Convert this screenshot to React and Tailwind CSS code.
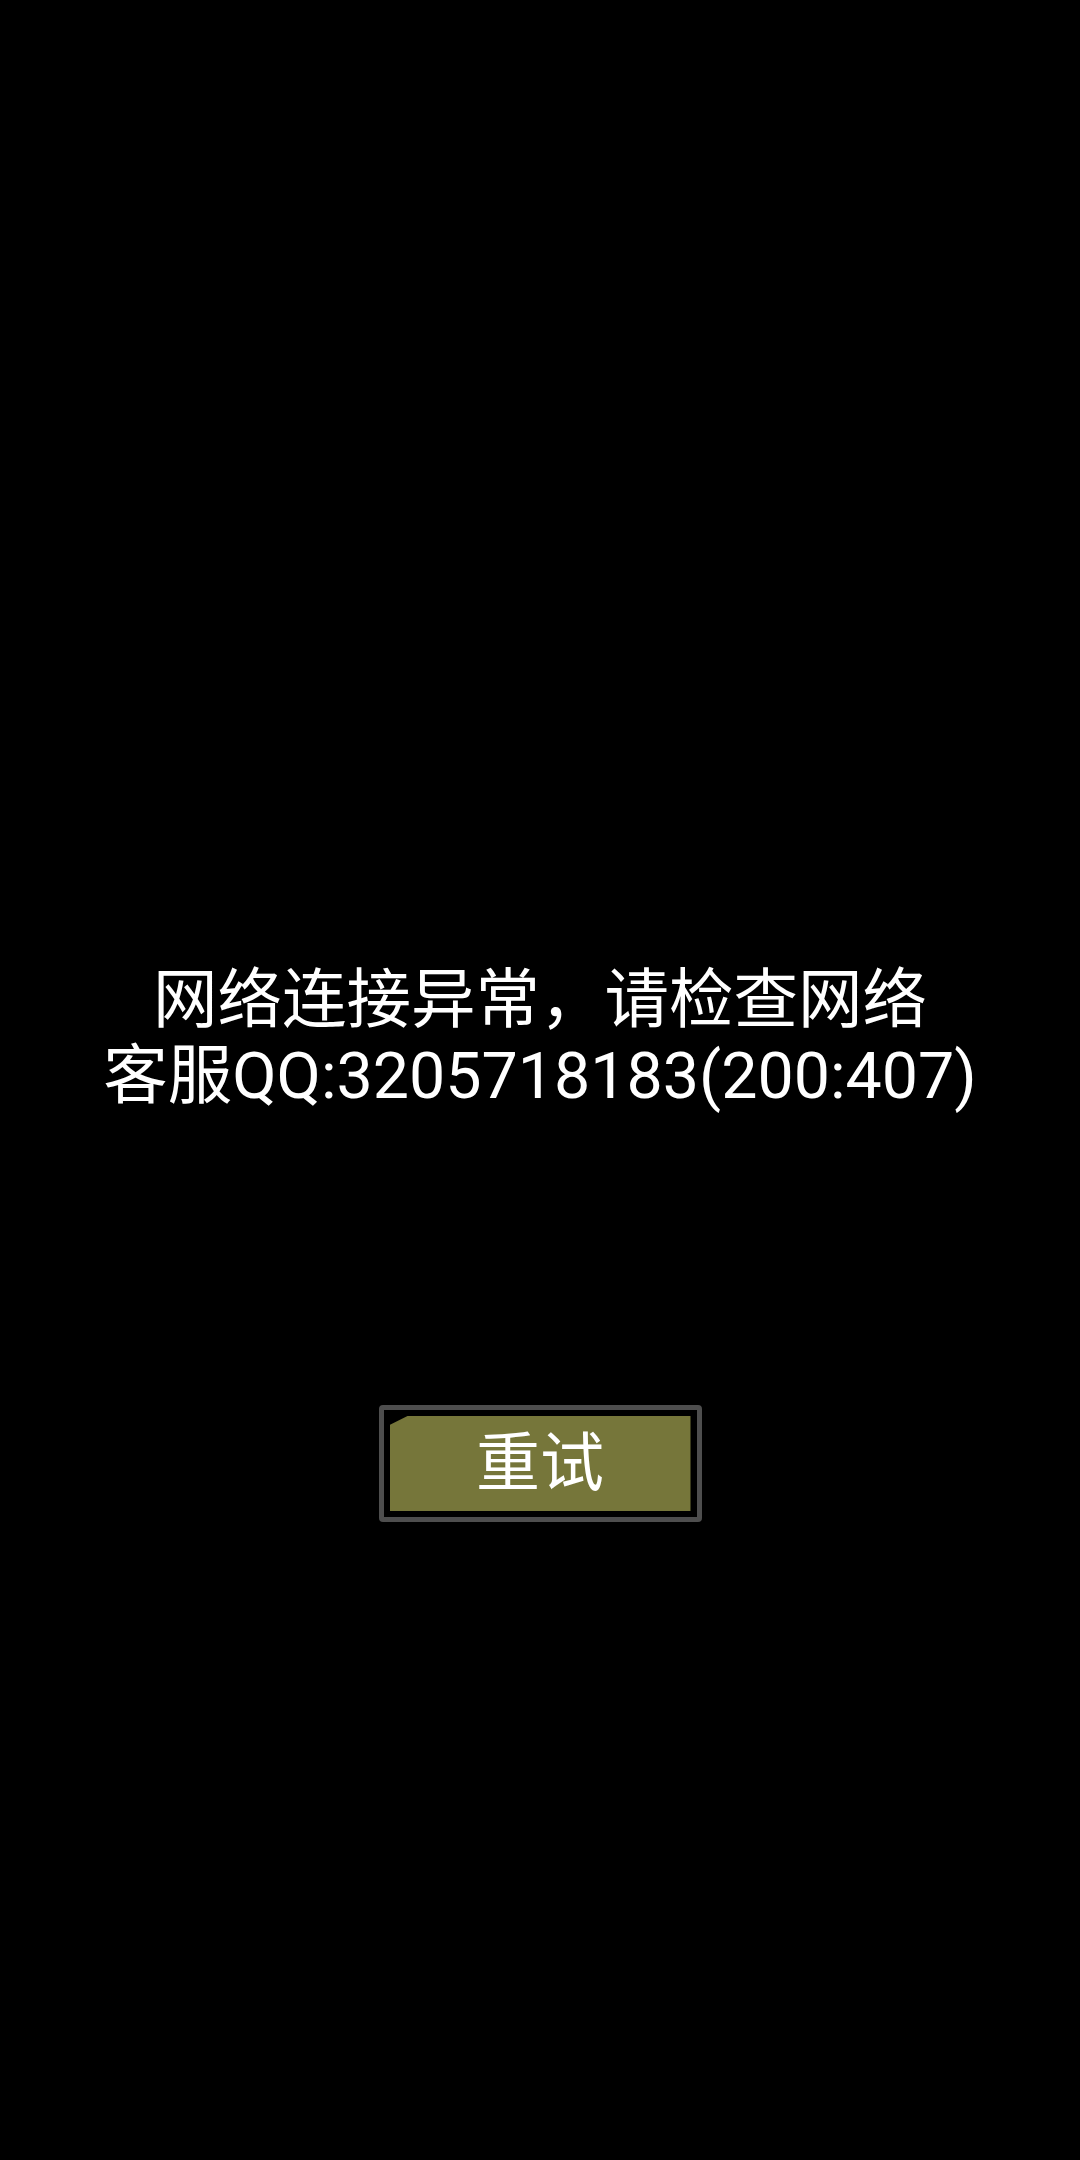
export default function App() {
  return (
    <div
      className="w-[1080px] h-[2160px] bg-black flex flex-col items-center text-white"
      style={{ fontFamily: 'Roboto, "Noto Sans CJK SC", sans-serif' }}
    >
      <div className="mt-[962px] text-[64.5px] leading-[76px] text-center whitespace-nowrap">
        <div>网络连接异常，请检查网络</div>
        <div>客服QQ:3205718183(200:407)</div>
      </div>
      <div className="mt-[291px] w-[323px] h-[117px] border-[5px] border-[#4e4e4e] rounded-[4px] p-[6px] bg-black">
        <div className="w-full h-full bg-[#76763a] flex items-center justify-center text-[64px] leading-none [clip-path:polygon(0_9px,18px_0,100%_0,100%_100%,0_100%)]">
          重试
        </div>
      </div>
    </div>
  );
}
